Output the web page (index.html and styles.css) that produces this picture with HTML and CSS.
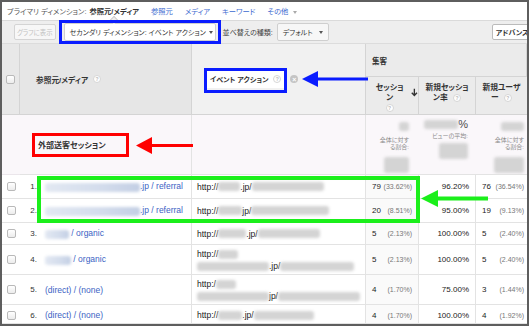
FILE: index.html
```html
<!DOCTYPE html>
<html lang="ja">
<head>
    <meta charset="UTF-8">
    <meta name="viewport" content="width=device-width, initial-scale=1.0">
    <title>参照元/メディア - イベント アクション</title>
    <link rel="stylesheet" href="styles.css">
</head>
<body>
    <div class="page">
        <div class="frame">
            <div class="dimbar">
                <span class="dim-label">プライマリ ディメンション:</span>
                <span class="dim-current">参照元/メディア</span>
                <a class="dim-link" href="#">参照元</a>
                <a class="dim-link" href="#">メディア</a>
                <a class="dim-link" href="#">キーワード</a>
                <a class="dim-link" href="#">その他 <span class="caret caret-light"></span></a>
            </div>

            <div class="toolbar">
                <span class="btn btn-disabled">グラフに表示</span>
                <span class="select select-secondary">セカンダリ ディメンション: イベント アクション <span class="caret"></span></span>
                <span class="sort-label">並べ替えの種類:</span>
                <span class="select select-sort">デフォルト <span class="caret"></span></span>
                <span class="btn btn-adv">アドバンス</span>
            </div>

            <div class="thead">
                <div class="h-cell h-check"><span class="checkbox"></span></div>
                <div class="h-cell h-source">参照元/メディア <span class="help">?</span></div>
                <div class="h-cell h-event">
                    <span class="chip">イベント アクション <span class="help">?</span></span>
                    <span class="remove">×</span>
                </div>
                <div class="h-cell h-group">集客</div>
                <div class="h-cell h-metric h-sorted">
                    <span class="h-text">セッション<br><span class="help">?</span></span>
                    <svg class="sort-arrow" width="7" height="9" viewBox="0 0 7 9"><path d="M3.5 0.5v7M0.8 4.8l2.7 2.8 2.7-2.8" fill="none" stroke="#333" stroke-width="1.4"/></svg>
                </div>
                <div class="h-cell h-metric"><span class="h-text">新規セッショ<br>ン率 <span class="help">?</span></span></div>
                <div class="h-cell h-metric h-last"><span class="h-text">新規ユーザ<br>ー <span class="help">?</span></span></div>
            </div>

            <div class="row row-total">
                <div class="cell c-check"></div>
                <div class="cell c-source"><span class="segment">外部送客セッション</span></div>
                <div class="cell c-url"></div>
                <div class="cell c-total">
                    <span class="smudge s-gray w10"></span>
                    <span class="total-note">全体に対す<br>る割合:</span>
                    <span class="smudge s-gray w25 tall"></span>
                </div>
                <div class="cell c-total c-total-rate">
                    <span class="total-top"><span class="smudge s-gray w34"></span><span class="big-pct">%</span></span>
                    <span class="total-note">ビューの平均:</span>
                    <span class="smudge s-gray w29 tall"></span>
                </div>
                <div class="cell c-total c-total-last">
                    <span class="smudge s-gray w23"></span>
                    <span class="total-note">全体に対す<br>る割合:</span>
                    <span class="smudge s-gray w30 tall"></span>
                </div>
            </div>

            <div class="row r1">
                <div class="cell c-check"><span class="checkbox"></span></div>
                <div class="cell c-source"><span class="idx">1.</span><span class="src"><span class="smudge s-blue w95"></span>.jp / referral</span></div>
                <div class="cell c-url">http://<span class="smudge s-gray w22"></span>.jp/<span class="smudge s-gray w72"></span></div>
                <div class="cell c-sess"><span class="num">79</span><span class="pct">(33.62%)</span></div>
                <div class="cell c-rate">96.20%</div>
                <div class="cell c-users"><span class="num">76</span><span class="pct">(36.54%)</span></div>
            </div>
            <div class="row r2">
                <div class="cell c-check"><span class="checkbox"></span></div>
                <div class="cell c-source"><span class="idx">2.</span><span class="src"><span class="smudge s-blue w95"></span>.jp / referral</span></div>
                <div class="cell c-url">http://<span class="smudge s-gray w24"></span>jp/<span class="smudge s-gray w78"></span></div>
                <div class="cell c-sess"><span class="num">20</span><span class="pct">(8.51%)</span></div>
                <div class="cell c-rate">95.00%</div>
                <div class="cell c-users"><span class="num">19</span><span class="pct">(9.13%)</span></div>
            </div>
            <div class="row r3">
                <div class="cell c-check"><span class="checkbox"></span></div>
                <div class="cell c-source"><span class="idx">3.</span><span class="src"><span class="smudge s-blue w24"></span> / organic</span></div>
                <div class="cell c-url">http://<span class="smudge s-gray w28"></span>.jp/<span class="smudge s-gray w62"></span></div>
                <div class="cell c-sess"><span class="num">5</span><span class="pct">(2.13%)</span></div>
                <div class="cell c-rate">100.00%</div>
                <div class="cell c-users"><span class="num">5</span><span class="pct">(2.40%)</span></div>
            </div>
            <div class="row r4">
                <div class="cell c-check"><span class="checkbox"></span></div>
                <div class="cell c-source"><span class="idx">4.</span><span class="src"><span class="smudge s-blue w26"></span> / organic</span></div>
                <div class="cell c-url"><span class="url-lines">http://<span class="smudge s-gray w20"></span><br><span class="smudge s-gray w72"></span>.jp/<span class="smudge s-gray w74"></span></span></div>
                <div class="cell c-sess"><span class="num">5</span><span class="pct">(2.13%)</span></div>
                <div class="cell c-rate">100.00%</div>
                <div class="cell c-users"><span class="num">5</span><span class="pct">(2.40%)</span></div>
            </div>
            <div class="row r5">
                <div class="cell c-check"><span class="checkbox"></span></div>
                <div class="cell c-source"><span class="idx">5.</span><span class="src">(direct) / (none)</span></div>
                <div class="cell c-url"><span class="url-lines">http:/<span class="smudge s-gray w20"></span><br><span class="smudge s-gray w72"></span>jp/<span class="smudge s-gray w82"></span></span></div>
                <div class="cell c-sess"><span class="num">4</span><span class="pct">(1.70%)</span></div>
                <div class="cell c-rate">75.00%</div>
                <div class="cell c-users"><span class="num">3</span><span class="pct">(1.44%)</span></div>
            </div>
            <div class="row r6">
                <div class="cell c-check"><span class="checkbox"></span></div>
                <div class="cell c-source"><span class="idx">6.</span><span class="src">(direct) / (none)</span></div>
                <div class="cell c-url">http://<span class="smudge s-gray w24"></span>.jp/<span class="smudge s-gray w60"></span></div>
                <div class="cell c-sess"><span class="num">4</span><span class="pct">(1.70%)</span></div>
                <div class="cell c-rate">100.00%</div>
                <div class="cell c-users"><span class="num">4</span><span class="pct">(1.92%)</span></div>
            </div>
        </div>

        <!-- annotations drawn over the screenshot -->
        <div class="mark mark-blue mark-secondary"></div>
        <div class="mark mark-blue mark-event"></div>
        <div class="mark mark-red mark-segment"></div>
        <div class="mark mark-green mark-rows"></div>

        <svg class="arrow arrow-blue" width="66" height="16" viewBox="0 0 66 16">
            <polygon points="0,8 16,0 16,6.5 66,6.5 66,9.5 16,9.5 16,16" fill="#0a1cff"/>
        </svg>
        <svg class="arrow arrow-red" width="57" height="17" viewBox="0 0 57 17">
            <polygon points="0,8.5 16,0 16,7 57,7 57,10 16,10 16,17" fill="#f00"/>
        </svg>
        <svg class="arrow arrow-green" width="67" height="17" viewBox="0 0 67 17">
            <polygon points="0,8.5 17,0 17,6.5 67,6.5 67,10.5 17,10.5 17,17" fill="#1bef1b"/>
        </svg>
    </div>
</body>
</html>
```

FILE: styles.css
```css
body {
    margin: 0;
    font-family: "Liberation Sans", "Noto Sans CJK JP", sans-serif;
    font-feature-settings: "palt";
    background: #fff;
}

.page {
    position: relative;
    width: 529px;
    height: 326px;
    overflow: hidden;
}

.frame {
    box-sizing: border-box;
    width: 529px;
    height: 326px;
    border: 2px solid #5e5e5e;
    overflow: hidden;
    background: #fff;
}

/* primary dimension bar */
.dimbar {
    height: 18px;
    display: flex;
    align-items: center;
    padding-left: 5px;
    font-size: 7.3px;
    white-space: nowrap;
}

.dim-label {
    color: #555;
}

.dim-current {
    position: relative;
    margin-left: 3px;
    font-weight: bold;
    color: #333;
}

.dim-current::after {
    content: "";
    position: absolute;
    left: 22px;
    top: 11px;
    width: 5px;
    height: 5px;
    background: #eee;
    border-left: 1px solid #cfcfcf;
    border-top: 1px solid #cfcfcf;
    transform: rotate(45deg);
}

.dim-link {
    margin-left: 12px;
    color: #3b6ad0;
    text-decoration: none;
}

.caret {
    display: inline-block;
    width: 0;
    height: 0;
    border-left: 2.5px solid transparent;
    border-right: 2.5px solid transparent;
    border-top: 3px solid #555;
    vertical-align: middle;
    margin-left: 3px;
}

.caret-light {
    border-top-color: #aaa;
}

/* toolbar */
.toolbar {
    box-sizing: border-box;
    height: 24px;
    display: flex;
    align-items: center;
    padding-left: 12px;
    background: #eeeeee;
    border-top: 1px solid #dadada;
    border-bottom: 1px solid #dcdcdc;
    font-size: 7px;
    white-space: nowrap;
    overflow: hidden;
}

.btn {
    box-sizing: border-box;
    height: 16px;
    display: inline-flex;
    align-items: center;
    padding: 0 3px;
    border: 1px solid #d4d4d4;
    border-radius: 2px;
    background: #f7f7f7;
    flex-shrink: 0;
}

.btn-disabled {
    color: #c2c2c2;
    padding: 0 2px;
    font-size: 6.4px;
}

.select {
    box-sizing: border-box;
    height: 18px;
    display: inline-flex;
    align-items: center;
    justify-content: space-between;
    padding: 0 5px;
    background: #fff;
    border: 1px solid #cfcfcf;
    border-radius: 2px;
    color: #333;
    flex-shrink: 0;
}

.select-secondary {
    width: 152px;
    margin-left: 8px;
}

.select-sort {
    width: 52px;
    margin-left: 4px;
    background: #f7f7f7;
}

.sort-label {
    margin-left: 7px;
    color: #444;
}

.btn-adv {
    margin-left: 163px;
    width: 50px;
    background: #fff;
    border-color: #bbb;
    font-weight: bold;
    color: #333;
}

/* table header */
.thead {
    display: grid;
    grid-template-columns: 18px 172px 174px 53px 57px 51px;
    grid-template-rows: 33px 38px;
    font-size: 7px;
    font-weight: bold;
    color: #333;
}

.h-cell {
    box-sizing: border-box;
    border-right: 1px solid #d4d4d4;
    border-bottom: 1px solid #d4d4d4;
    background: #e8e8e8;
}

.h-check {
    grid-row: 1 / 3;
    display: flex;
    align-items: center;
    justify-content: center;
}

.h-source {
    grid-row: 1 / 3;
    display: flex;
    align-items: center;
    padding-left: 16px;
    font-size: 7.7px;
    background: #e6e6e6;
}

.h-event {
    grid-row: 1 / 3;
    display: flex;
    align-items: center;
    padding-left: 14px;
    background: #f1f1f1;
}

.h-group {
    grid-column: 4 / 7;
    display: flex;
    align-items: center;
    padding-left: 6px;
    font-size: 7.5px;
    background: #ebebeb;
}

.h-metric {
    display: flex;
    justify-content: center;
    align-items: flex-start;
    padding-top: 6px;
    text-align: center;
    font-size: 7.8px;
    line-height: 10px;
    background: #ebebeb;
}

.h-sorted {
    justify-content: flex-start;
    padding-left: 7px;
}

.h-last {
    border-right: 0;
}

.sort-arrow {
    margin: 5px 0 0 5px;
}

.help {
    display: inline-flex;
    align-items: center;
    justify-content: center;
    box-sizing: border-box;
    width: 8px;
    height: 8px;
    margin-left: 5px;
    border-radius: 50%;
    background: #fff;
    border: 1px solid #d6d6d6;
    color: #b8b8b8;
    font-size: 5px;
    font-weight: bold;
    vertical-align: middle;
}

.h-metric .help {
    margin-left: 3px;
}

.h-sorted .help {
    margin-left: 0;
}

.chip {
    display: inline-flex;
    align-items: center;
    height: 17px;
    padding: 0 3px 0 4px;
    background: #fff;
}

.remove {
    display: inline-flex;
    align-items: center;
    justify-content: center;
    width: 8px;
    height: 8px;
    margin-left: 6px;
    border-radius: 50%;
    background: #c4c4c4;
    color: #fff;
    font-size: 7px;
    line-height: 1;
}

.checkbox {
    box-sizing: border-box;
    display: inline-block;
    width: 9px;
    height: 9px;
    border: 1px solid #b9b9b9;
    border-radius: 2px;
    background: linear-gradient(#ffffff, #ececec);
}

/* body rows */
.row {
    display: grid;
    grid-template-columns: 18px 172px 174px 53px 57px 51px;
    font-size: 8px;
    color: #222;
}

.cell {
    box-sizing: border-box;
    display: flex;
    align-items: center;
    border-bottom: 1px solid #e3e3e3;
    white-space: nowrap;
    overflow: hidden;
}

.c-source,
.c-url,
.c-sess,
.c-rate {
    border-right: 1px solid #e3e3e3;
}

.c-check {
    justify-content: center;
}

.r1 { height: 24px; }
.r2 { height: 24px; }
.r3 { height: 22px; }
.r4 { height: 30px; }
.r5 { height: 30px; }
.r6 { height: 19px; }

.r6 .cell {
    padding-top: 2px;
}

.idx {
    width: 17px;
    text-align: right;
    color: #333;
}

.src {
    margin-left: 8px;
    color: #3b63c4;
    font-size: 8.5px;
}

.c-url {
    padding-left: 5px;
    font-size: 8.5px;
    color: #222;
}

.url-lines {
    line-height: 12px;
}

.c-sess {
    justify-content: space-between;
    padding: 0 6px;
    background: #fafafa;
}

.c-users {
    justify-content: space-between;
    padding: 0 3px 0 6px;
}

.num {
    font-size: 8px;
    color: #222;
}

.pct {
    font-size: 7px;
    color: #777;
}

.c-rate {
    justify-content: flex-end;
    padding-right: 6px;
}

/* total row */
.row-total {
    height: 60px;
}

.row-total .cell {
    background: #faf7fa;
}

.row-total .c-check {
    border-bottom-color: #ebe6eb;
}

.segment {
    margin-left: 18px;
    font-size: 8px;
    font-weight: bold;
    color: #333;
}

.c-total {
    flex-direction: column;
    align-items: flex-end;
    justify-content: flex-start;
    padding: 7px 10px 0 0;
    gap: 6px;
}

.c-total-rate {
    padding: 3px 8px 0 0;
    gap: 3px;
}

.c-total-last {
    padding-right: 3px;
}

.total-note {
    font-size: 6px;
    line-height: 7px;
    color: #8a8a8a;
    text-align: right;
}

.total-top {
    display: flex;
    align-items: center;
}

.big-pct {
    font-size: 11px;
    color: #4a4a4a;
}

/* blurred bits of the screenshot */
.smudge {
    display: inline-block;
    height: 9px;
    border-radius: 3px;
    filter: blur(1.6px);
    vertical-align: middle;
}

.s-gray {
    background: #d4d4d4;
}

.s-blue {
    background: linear-gradient(90deg, #e2e8f2, #d3dcec 60%, #c3cfe4);
}

.tall { height: 16px; }

.w10 { width: 10px; }
.w20 { width: 20px; }
.w22 { width: 22px; }
.w23 { width: 23px; }
.w24 { width: 24px; }
.w25 { width: 25px; }
.w26 { width: 26px; }
.w28 { width: 28px; }
.w29 { width: 29px; }
.w30 { width: 30px; }
.w34 { width: 34px; }
.w60 { width: 60px; }
.w62 { width: 62px; }
.w72 { width: 72px; }
.w74 { width: 74px; }
.w78 { width: 78px; }
.w82 { width: 82px; }
.w95 { width: 95px; }

/* annotation boxes and arrows */
.mark {
    position: absolute;
    box-sizing: border-box;
    pointer-events: none;
}

.mark-blue {
    border: 3px solid #0a1cff;
}

.mark-red {
    border: 3px solid #f00;
}

.mark-green {
    border: 4px solid #1bef1b;
}

.mark-secondary {
    left: 59px;
    top: 20px;
    width: 162px;
    height: 24px;
}

.mark-event {
    left: 204px;
    top: 68px;
    width: 83px;
    height: 25px;
}

.mark-segment {
    left: 32px;
    top: 133px;
    width: 97px;
    height: 24px;
}

.mark-rows {
    left: 37px;
    top: 176px;
    width: 383px;
    height: 47px;
}

.arrow {
    position: absolute;
}

.arrow-blue {
    left: 302px;
    top: 71px;
}

.arrow-red {
    left: 136px;
    top: 137px;
}

.arrow-green {
    left: 421px;
    top: 190px;
}
```
